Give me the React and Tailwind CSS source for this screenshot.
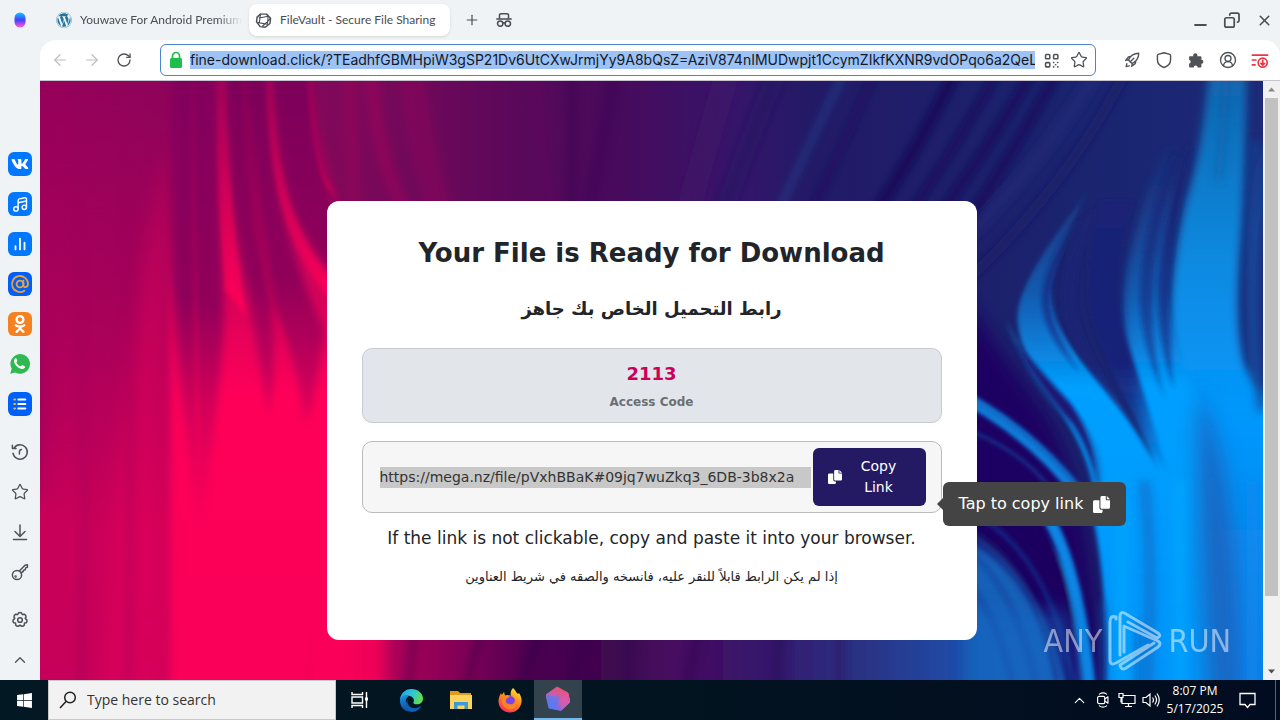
import React from "react";
import {
  ArrowLeft, ArrowRight, RotateCw, Star, CircleUserRound, Plus, X, ChevronUp,
} from "lucide-react";
import { FaWordpress, FaVk, FaOdnoklassniki, FaWindows } from "react-icons/fa";

const URL_TEXT =
  "fine-download.click/?TEadhfGBMHpiW3gSP21Dv6UtCXwJrmjYy9A8bQsZ=AziV874nIMUDwpjt1CcymZIkfKXNR9vdOPqo6a2QeL";

function Line({ size = 20, width = 1.5, children, className = "" }) {
  return (
    <svg width={size} height={size} viewBox="0 0 20 20" fill="none" stroke="currentColor"
      strokeWidth={width} strokeLinecap="round" strokeLinejoin="round" className={className} aria-hidden="true">
      {children}
    </svg>
  );
}

function CopyIcon({ size }) {
  return (
    <svg width={size} height={size} viewBox="0 0 512 512" fill="currentColor" className="shrink-0" aria-hidden="true">
      <path d="M384 96V0H272c-26.500 0-48 21.500-48 48v288c0 26.500 21.500 48 48 48h192c26.500 0 48-21.500 48-48V128h-96c-17.600 0-32-14.400-32-32zM416 0v96h96L416 0zM192 352V128H48c-26.500 0-48 21.500-48 48v288c0 26.500 21.500 48 48 48h192c26.500 0 48-21.500 48-48v-48h-32c-35.300 0-64-28.700-64-64z" />
    </svg>
  );
}

function IconButton({ label, className = "size-8", children }) {
  return (
    <button type="button" aria-label={label} className={`flex shrink-0 items-center justify-center ${className}`}>
      {children}
    </button>
  );
}

function AppTile({ className, children }) {
  return <span className={`flex size-6 items-center justify-center rounded-md ${className}`}>{children}</span>;
}

function Sidebar() {
  return (
    <nav aria-label="Browser sidebar" className="flex w-10 shrink-0 flex-col text-[#4f5358]">
      <IconButton label="Home" className="size-10">
        <svg width="14" height="18" viewBox="0 0 14 18" aria-hidden="true">
          <defs>
            <linearGradient id="orb" x1="0" y1="0" x2="0" y2="1">
              <stop offset="0" stopColor="#10c8f8" />
              <stop offset="0.5" stopColor="#4a3cff" />
              <stop offset="1" stopColor="#ff5fd0" />
            </linearGradient>
            <filter id="orbSoft"><feGaussianBlur stdDeviation="0.7" /></filter>
          </defs>
          <rect x="1.5" y="1.5" width="11" height="15" rx="5.5" fill="url(#orb)" filter="url(#orbSoft)" />
        </svg>
      </IconButton>
      <div className="mt-26 flex flex-col">
        <IconButton label="VK" className="size-10"><AppTile className="bg-[#0077ff] text-white"><FaVk size={18} /></AppTile></IconButton>
        <IconButton label="Music" className="size-10">
          <AppTile className="bg-[#0077ff] text-white">
            <Line size={19}>
              <circle cx="5.2" cy="14.7" r="2.3" /><circle cx="14" cy="13" r="2.3" />
              <path d="M7.5 14.7V5.8c0-.9.5-1.5 1.4-1.7l5.6-1.2c1.1-.2 1.8.4 1.8 1.4V13M7.5 8.2l8.8-1.9" />
            </Line>
          </AppTile>
        </IconButton>
        <IconButton label="Statistics" className="size-10">
          <AppTile className="bg-[#0077ff] text-white"><Line size={18} width={2}><path d="M5 12.5V16M10 4v12M15 8.5V16" /></Line></AppTile>
        </IconButton>
        <IconButton label="Mail" className="size-10">
          <AppTile className="bg-[#005ff9] text-[#e8a33c]">
            <Line size={20} width={1.800}><circle cx="10" cy="10" r="3.400" /><path d="M13.400 6.600v4.600c0 2.900 4.600 2.500 4.600-1.200a8 8 0 1 0-3.600 6.700" /></Line>
          </AppTile>
        </IconButton>
        <IconButton label="Odnoklassniki" className="size-10"><AppTile className="bg-[#f58220] text-white"><FaOdnoklassniki size={18} /></AppTile></IconButton>
        <IconButton label="WhatsApp" className="size-10">
          <svg width="22" height="22" viewBox="0 0 22 22" aria-hidden="true">
            <path d="M1.200 20.800l1.500-5A9.800 9.800 0 1 1 6.300 19.400z" fill="#2fb950" />
            <path d="M7.600 5.800c-.5-.9-1-.8-1.600-.2-2 2.300-.6 5.300 2 7.900 2.700 2.600 5.700 3.300 7.600 1.500.8-.8.700-1.400 0-1.800l-1.900-1c-.6-.3-.9 0-1.300.6-.5.600-.9.600-1.600.3-1.300-.7-2.500-1.700-3.200-3-.3-.6-.1-.9.300-1.300.5-.5.500-.9.300-1.400z" fill="#fff" />
          </svg>
        </IconButton>
        <IconButton label="Lists" className="size-10">
          <AppTile className="bg-[#005ff9] text-white">
            <Line size={18} width={2}><path d="M8 5h8M8 10h8M8 15h8" /><path d="M3.500 5h1M3.500 10h1M3.500 15h1" stroke="#f7b82e" /></Line>
          </AppTile>
        </IconButton>
      </div>
      <div className="mt-2 flex flex-col">
        <IconButton label="History" className="size-10">
          <Line><path d="M4 6.200A7.200 7.200 0 1 1 3 11.200M2.400 3.200v3.400h3.600M11.400 7.600c-1.500.2-2 1-2 2.400v2" /></Line>
        </IconButton>
        <IconButton label="Bookmarks" className="size-10"><Star size={18} strokeWidth={1.700} /></IconButton>
        <IconButton label="Downloads" className="size-10"><Line><path d="M10 3v11M5 9.500l5 5 5-5M3.500 17.500h13" /></Line></IconButton>
        <IconButton label="Passwords" className="size-10">
          <Line><circle cx="7" cy="13" r="4.600" /><circle cx="5.600" cy="14.400" r="0.500" /><path d="M9.300 9L15 3.300l2.400-.5v2.600l-1.800.5-.3 1.900-1.800.4-.3 1.300-2.200 1.300" /></Line>
        </IconButton>
      </div>
      <div className="mt-auto flex flex-col">
        <IconButton label="Settings" className="size-10">
          <Line size={18} width={1.700}>
            <circle cx="10" cy="10" r="2.600" />
            <path d="M8.300 2.200Q10 1.200 11.700 2.200L12.500 3.900 14.900 3.600Q16.700 4.600 16.700 6.500L15.800 8.200 17.600 9.800Q18.300 11.500 17 13.100L15 13.300 14.700 15.700Q13.300 17.300 11.400 16.700L10 15.700 8.600 16.700Q6.700 17.300 5.300 15.700L5 13.300 3 13.100Q1.700 11.500 2.400 9.800L4.200 8.200 3.300 6.500Q3.300 4.600 5.100 3.600L7.500 3.900z" />
          </Line>
        </IconButton>
        <IconButton label="Collapse" className="size-10"><ChevronUp size={18} strokeWidth={1.700} /></IconButton>
      </div>
    </nav>
  );
}

function TabStrip() {
  return (
    <div className="flex h-10 items-center font-['Lato',sans-serif] text-[#4a4d52]">
      <div className="flex min-w-0 flex-1 items-center">
        <button type="button" className="flex h-8 w-[209px] items-center gap-2 pl-4 text-left text-xs whitespace-nowrap">
          <FaWordpress size={16} className="shrink-0 text-[#21759b]" />
          <span className="mask-r-from-85%">Youwave For Android Premium</span>
        </button>
        <button type="button" className="flex h-8 w-[201px] items-center gap-2 rounded-lg bg-white px-1.5 text-left text-xs whitespace-nowrap shadow-sm">
          <Line size={17} width={1.700}>
            <path d="M6.500 2.500L13.500 2.500 18.300 7.500 17.600 13.500 12 18 6 17.200 1.800 11.500 2.500 6z" />
            <path d="M6.500 2.500L5 13M5 7L15.500 5M15.500 5L14.500 14.500M18 8L9 16.500M14.500 14.500L4 12.500" strokeWidth="1.300" />
          </Line>
          <span>FileVault - Secure File Sharing</span>
        </button>
        <IconButton label="New tab" className="ml-1.5 size-8"><Plus size={16} strokeWidth={1.800} /></IconButton>
        <IconButton label="Incognito window">
          <Line size={18} width={1.700}><path d="M5 8V4.500C5 3.500 5.800 3 6.700 3h6.600c.9 0 1.700.5 1.700 1.500V8M2 9h16" /><circle cx="5.800" cy="14" r="3" /><circle cx="14.200" cy="14" r="3" /><path d="M8.800 13.500q1.200-.8 2.400 0" /></Line>
        </IconButton>
      </div>
      <div className="flex items-center">
        <IconButton label="Minimize"><Line size={18} width={2.200}><path d="M4.500 15.500h12" /></Line></IconButton>
        <IconButton label="Restore">
          <Line size={18} width={1.900}><rect x="2" y="7.500" width="10.500" height="10.500" rx="2" /><path d="M7.500 4.500V4c0-1 .8-1.700 1.700-1.700H16c1 0 1.800.7 1.800 1.700v6.600c0 1-.8 1.700-1.700 1.700" /></Line>
        </IconButton>
        <IconButton label="Close"><X size={17} strokeWidth={2.200} /></IconButton>
      </div>
    </div>
  );
}

function Toolbar() {
  return (
    <div className="flex h-[41px] items-center rounded-t-2xl border-b border-[#c9c3d0] bg-white pl-1 text-[#4f5358]">
      <IconButton label="Back"><ArrowLeft size={18} strokeWidth={1.600} className="text-[#b9bcc0]" /></IconButton>
      <IconButton label="Forward"><ArrowRight size={18} strokeWidth={1.600} className="text-[#b9bcc0]" /></IconButton>
      <IconButton label="Reload"><RotateCw size={16} strokeWidth={2} /></IconButton>
      <div className="ml-5 flex h-8 min-w-0 flex-1 items-center rounded-md border border-[#4a86cf] pr-0.5 pl-2">
        <svg width="14" height="18" viewBox="0 0 14 18" className="mr-[7px] shrink-0" aria-hidden="true">
          <path d="M3.500 8V5a3.500 3.500 0 0 1 7 0v3" fill="none" stroke="#1cbf4b" strokeWidth="1.700" />
          <rect x="1" y="7" width="12" height="10" rx="1.500" fill="#1cbf4b" />
        </svg>
        <input aria-label="Address" readOnly value={URL_TEXT} spellCheck={false}
          className="h-[18px] min-w-0 flex-1 bg-[#9dc3f6] font-['Inter',sans-serif] text-sm text-[#111827] outline-none" />
        <IconButton label="QR code" className="ml-0.5 size-7">
          <Line size={17} width={1.800}><rect x="3" y="3" width="5" height="5" rx="1" /><rect x="12.500" y="3" width="5" height="5" rx="1" /><rect x="3" y="12.500" width="5" height="5" rx="1" /><path d="M12.300 12.300h.4M17 12.300h.4M14.700 14.900h.4M12.300 17.500h.4M17.200 17.500h.4" /></Line>
        </IconButton>
        <IconButton label="Bookmark" className="size-7"><Star size={18} strokeWidth={1.700} /></IconButton>
      </div>
      <div className="ml-5 flex pr-1">
        <IconButton label="Boost">
          <Line size={18}><path d="M6 10c2-4 5.500-7.500 11.500-7.500C17.500 8.500 14 12 10 14zM6.500 9.500L3 10.500l3-4 3-.8M10.500 13.500L9.600 17l4-3 .7-3M7 16.500l-3.500.8L4.300 14" /><path d="M8 12l4-4" /></Line>
        </IconButton>
        <IconButton label="Protection">
          <Line size={18} width={1.600}><path d="M10 2l6.500 1.800q.8.300.8 1.200V10c0 4-3 6.800-7.300 8.300C5.700 16.800 2.700 14 2.700 10V5q0-.9.800-1.200z" /></Line>
        </IconButton>
        <IconButton label="Extensions">
          <svg width="16" height="16" viewBox="0 0 16 16" fill="currentColor" aria-hidden="true">
            <path d="M2 4.200h3.200a2.200 2.200 0 1 1 4.200 0h3.100q.9 0 .9.900v2.700a2 2 0 1 1 0 4v2.700q0 .9-.9.900h-2.800a2 2 0 0 0-4 0H2q-.9 0-.9-.9v-2.800a2 2 0 0 0 0-3.900V5.100q0-.9.900-.9z" />
          </svg>
        </IconButton>
        <IconButton label="Profile"><CircleUserRound size={18} strokeWidth={1.800} /></IconButton>
        <IconButton label="Download progress" className="size-8 text-[#ee3345]">
          <Line size={18} width={1.900}><path d="M1.500 4.500h17M1.500 10h4M1.500 15.500h3" /><circle cx="13" cy="13" r="5" /><path d="M13 10.500v5M11 13.700l2 2 2-2" /></Line>
        </IconButton>
      </div>
    </div>
  );
}

function Backdrop() {
  return (
    <svg className="absolute inset-0 size-full" viewBox="0 0 1223 599" preserveAspectRatio="none" aria-hidden="true">
      <defs>
        <linearGradient id="base" x1="0" x2="1" y1="0" y2="0">
          <stop offset="0" stopColor="#94005a" /><stop offset="0.24" stopColor="#80085a" />
          <stop offset="0.36" stopColor="#62085a" /><stop offset="0.47" stopColor="#480a5c" />
          <stop offset="0.57" stopColor="#35156a" /><stop offset="0.63" stopColor="#231a66" />
          <stop offset="0.85" stopColor="#1a246f" /><stop offset="1" stopColor="#1c2a78" />
        </linearGradient>
        <linearGradient id="redfall" x1="0" x2="0" y1="0" y2="1">
          <stop offset="0" stopColor="#c8005a" stopOpacity="0" /><stop offset="0.4" stopColor="#c8005a" stopOpacity="0.45" />
          <stop offset="0.7" stopColor="#cc005a" stopOpacity="0.95" /><stop offset="1" stopColor="#c6005a" />
        </linearGradient>
        <linearGradient id="hot" gradientUnits="userSpaceOnUse" x1="0" x2="0" y1="0" y2="599">
          <stop offset="0" stopColor="#ff0058" stopOpacity="0.1" /><stop offset="0.3" stopColor="#ff0058" stopOpacity="0.55" />
          <stop offset="0.52" stopColor="#ff0059" /><stop offset="1" stopColor="#fa0059" />
        </linearGradient>
        <linearGradient id="dusk" gradientUnits="userSpaceOnUse" x1="0" x2="0" y1="0" y2="440">
          <stop offset="0" stopColor="#82005c" /><stop offset="0.5" stopColor="#90005a" /><stop offset="1" stopColor="#e0005a" stopOpacity="0.2" />
        </linearGradient>
        <linearGradient id="duskB" gradientUnits="userSpaceOnUse" x1="0" x2="0" y1="0" y2="360">
          <stop offset="0" stopColor="#7c005a" /><stop offset="0.55" stopColor="#90005a" /><stop offset="1" stopColor="#c8005a" stopOpacity="0.5" />
        </linearGradient>
        <linearGradient id="ember" gradientUnits="userSpaceOnUse" x1="0" x2="0" y1="0" y2="230">
          <stop offset="0" stopColor="#a80058" stopOpacity="0.7" /><stop offset="0.4" stopColor="#c80058" /><stop offset="1" stopColor="#ff0058" />
        </linearGradient>
        <linearGradient id="emberLow" gradientUnits="userSpaceOnUse" x1="0" x2="0" y1="0" y2="330">
          <stop offset="0" stopColor="#b00058" stopOpacity="0.3" /><stop offset="0.6" stopColor="#c80058" stopOpacity="0.7" /><stop offset="1" stopColor="#ff0058" />
        </linearGradient>
        <linearGradient id="root" gradientUnits="userSpaceOnUse" x1="0" x2="0" y1="420" y2="599">
          <stop offset="0" stopColor="#c0005a" stopOpacity="0.7" /><stop offset="0.5" stopColor="#ac005a" /><stop offset="1" stopColor="#a4005a" />
        </linearGradient>
        <linearGradient id="foot" gradientUnits="userSpaceOnUse" x1="300" x2="960" y1="0" y2="0">
          <stop offset="0" stopColor="#fa0058" /><stop offset="0.055" stopColor="#ee0058" /><stop offset="0.085" stopColor="#a80058" />
          <stop offset="0.2" stopColor="#7a0055" /><stop offset="0.29" stopColor="#4c0050" /><stop offset="0.42" stopColor="#3c0850" />
          <stop offset="0.5" stopColor="#480a60" /><stop offset="0.65" stopColor="#34186c" /><stop offset="0.8" stopColor="#2a3486" />
          <stop offset="0.92" stopColor="#2048a4" /><stop offset="1" stopColor="#1464c0" />
        </linearGradient>
        <linearGradient id="sky" gradientUnits="userSpaceOnUse" x1="0" x2="0" y1="0" y2="599">
          <stop offset="0" stopColor="#1268b0" /><stop offset="0.3" stopColor="#0e8ae0" /><stop offset="0.55" stopColor="#0498fc" /><stop offset="1" stopColor="#0a80e8" />
        </linearGradient>
        <linearGradient id="wisp" gradientUnits="userSpaceOnUse" x1="0" x2="0" y1="60" y2="599">
          <stop offset="0" stopColor="#1a5ca8" stopOpacity="0" /><stop offset="0.28" stopColor="#1468c0" stopOpacity="0.8" />
          <stop offset="0.46" stopColor="#02a0ff" /><stop offset="1" stopColor="#0696fa" />
        </linearGradient>
        <linearGradient id="gap" gradientUnits="userSpaceOnUse" x1="0" x2="0" y1="100" y2="400">
          <stop offset="0" stopColor="#1a2474" /><stop offset="0.6" stopColor="#192078" /><stop offset="1" stopColor="#0a70d4" stopOpacity="0.2" />
        </linearGradient>
        <filter id="b2" filterUnits="userSpaceOnUse" x="-60" y="-60" width="1343" height="719"><feGaussianBlur stdDeviation="2" /></filter>
        <filter id="b4" filterUnits="userSpaceOnUse" x="-60" y="-60" width="1343" height="719"><feGaussianBlur stdDeviation="4" /></filter>
        <filter id="b9" filterUnits="userSpaceOnUse" x="-60" y="-60" width="1343" height="719"><feGaussianBlur stdDeviation="10" /></filter>
      </defs>
      <rect width="1223" height="599" fill="url(#base)" />
      <path d="M-50 -20H140V640H-50z" fill="url(#redfall)" filter="url(#b4)" />
      <path d="M-50 100Q20 260 -5 420L-50 420z" fill="#85005c" opacity="0.6" filter="url(#b9)" />
      <path d="M60 640Q76 300 128 60V640z" fill="#f0005a" opacity="0.4" filter="url(#b9)" />

      <path d="M130 -40H268Q276 60 300 130H345V640H130z" fill="url(#hot)" filter="url(#b4)" />
      <path d="M130 -40H176Q178 120 184 240Q178 340 160 450Q140 340 134 230Q126 120 130 -40z" fill="url(#dusk)" filter="url(#b4)" />
      <path d="M188 -40H226Q228 70 242 130Q256 190 285 250Q276 310 266 345Q254 270 232 225Q238 290 228 335Q210 220 196 150Q186 80 188 -40z" fill="url(#duskB)" filter="url(#b4)" />
      <path d="M234 -40H268Q270 60 290 106L310 210Q268 170 250 120Q234 60 234 -40z" fill="url(#duskB)" filter="url(#b4)" />
      <path d="M177 -40Q176 110 186 210L206 235Q186 120 184 -40z" fill="url(#ember)" filter="url(#b2)" />
      <path d="M225 -40Q226 90 250 150Q268 200 310 240L310 215Q268 180 250 124Q232 70 232 -40z" fill="url(#ember)" filter="url(#b2)" />
      <path d="M266 -40Q268 60 286 106L310 128Q284 110 277 60Q272 20 273 -40z" fill="url(#ember)" opacity="0.85" filter="url(#b2)" />
      <path d="M200 -40Q200 120 236 250L262 335Q226 210 205 -40z" fill="url(#emberLow)" opacity="0.55" filter="url(#b2)" />
      <path d="M150 -40H155L160 420Q152 300 150 -40z" fill="url(#emberLow)" opacity="0.5" filter="url(#b2)" />
      <g fill="none" stroke="#b80058" filter="url(#b4)">
        <path d="M330 -50Q330 60 362 125" strokeWidth="14" opacity="0.35" />
        <path d="M366 -50Q376 60 404 140" strokeWidth="26" opacity="0.2" />
        <path d="M312 -50Q308 60 316 130" strokeWidth="14" opacity="0.25" />
      </g>
      <path d="M84 620Q90 300 84 60Q100 300 92 620zM36 620Q44 340 38 110Q54 340 44 620z" fill="#98005a" opacity="0.3" filter="url(#b4)" />

      <path d="M200 410Q201 520 190 650H160Q178 520 200 410z" fill="url(#root)" filter="url(#b4)" />
      <path d="M254 450Q240 550 240 650H208Q222 540 254 450z" fill="url(#root)" filter="url(#b4)" />
      <path d="M304 480L290 650H250Q264 560 304 480z" fill="url(#root)" filter="url(#b4)" />
      <path d="M206 520Q204 580 208 640H200Q200 580 206 520z" fill="url(#root)" opacity="0.6" filter="url(#b2)" />
      <path d="M272 540L260 650H268z" fill="#f00058" filter="url(#b2)" />

      <g fill="none" filter="url(#b4)">
        <path d="M530 -50Q536 80 528 160" stroke="#360050" strokeWidth="12" opacity="0.4" />
        <path d="M578 -50Q566 70 540 160" stroke="#350052" strokeWidth="14" opacity="0.4" />
        <path d="M492 -50Q500 80 520 160" stroke="#700a60" strokeWidth="8" opacity="0.25" />
        <path d="M700 -50Q664 70 640 160" stroke="#451668" strokeWidth="24" opacity="0.4" />
        <path d="M756 -50Q710 50 674 160" stroke="#221560" strokeWidth="18" opacity="0.5" />
        <path d="M810 -20Q770 60 725 160" stroke="#1c4a94" strokeWidth="6" opacity="0.6" />
        <path d="M850 -50Q805 70 755 160" stroke="#171058" strokeWidth="8" opacity="0.4" />
        <path d="M935 -50Q880 70 816 160" stroke="#13064e" strokeWidth="11" opacity="0.7" />
        <path d="M980 -50Q910 80 850 160" stroke="#150a54" strokeWidth="8" opacity="0.6" />
        <path d="M1015 -50Q950 70 880 160M1040 -50Q965 90 905 172" stroke="#140352" strokeWidth="10" opacity="0.6" />
        <path d="M1105 -50Q1040 100 905 220" stroke="#17145e" strokeWidth="10" opacity="0.4" />
        <path d="M1080 -50Q1010 80 907 175" stroke="#262a7a" strokeWidth="14" opacity="0.5" />
      </g>

      <path d="M900 180Q945 250 990 310Q1060 390 1062 640H900z" fill="#1a0562" filter="url(#b9)" />
      <path d="M1172 -50H1207Q1206 90 1200 168Q1194 250 1205 285L1260 370V650H1060Q1090 480 1116 400Q1138 340 1131 250Q1128 200 1146 120Q1166 60 1172 -50z" fill="url(#sky)" filter="url(#b4)" />
      <path d="M1146 10Q1086 150 1084 219Q1084 290 1110 370Q1122 470 1108 650H1190L1160 330Q1126 250 1128 200Q1132 120 1146 10z" fill="url(#wisp)" filter="url(#b4)" />
      <path d="M1048 110Q990 185 980 220Q970 250 1000 300Q1062 380 1054 440Q1070 520 1066 650H1160Q1154 470 1120 391Q1086 330 1054 295Q1004 240 1012 200Q1020 165 1048 110z" fill="url(#wisp)" filter="url(#b2)" />
      <g filter="url(#b2)">
        <path d="M1060 120Q1036 200 1058 258Q1084 320 1128 395Q1104 310 1083 250Q1072 190 1094 120z" fill="url(#gap)" />
        <path d="M1050 130Q1012 190 1024 238Q1042 290 1096 345Q1050 280 1038 236Q1030 190 1056 130z" fill="url(#gap)" opacity="0.7" />
        <path d="M1036 140Q998 190 1002 226Q1006 256 1040 292Q1012 250 1010 222Q1010 190 1040 140z" fill="url(#gap)" opacity="0.6" />
        <path d="M1134 70Q1100 150 1100 220Q1102 270 1126 320Q1110 270 1112 220Q1112 150 1140 80z" fill="url(#gap)" opacity="0.5" />
        <path d="M1148 60Q1120 150 1118 210Q1118 260 1134 310Q1128 260 1130 210Q1132 150 1152 70z" fill="url(#gap)" opacity="0.55" />
      </g>
      <g fill="none" filter="url(#b4)">
        <path d="M1187 -50Q1186 40 1178 100" stroke="#184f9c" strokeWidth="7" opacity="0.4" />
        <path d="M1232 60Q1202 190 1222 330" stroke="#184a9c" strokeWidth="9" opacity="0.8" />
        <path d="M1216 60Q1206 200 1214 300" stroke="#1565b8" strokeWidth="4" opacity="0.7" />
      </g>
      <path d="M965 238Q985 296 1022 335Q1056 376 1058 420Q1072 380 1040 335Q1000 296 965 238z" fill="#1668b8" opacity="0.5" filter="url(#b2)" />
      <path d="M976 262Q1002 310 1034 344Q1052 372 1058 408Q1056 360 1030 322Q1000 290 976 262z" fill="#1a1672" filter="url(#b2)" />
      <g fill="none" filter="url(#b2)">
        <path d="M900 304Q990 346 1044 420" stroke="#0a84e0" strokeWidth="12" />
        <path d="M900 304Q990 344 1044 416" stroke="#1a4aa8" strokeWidth="2" />
        <path d="M900 340Q980 362 1016 415" stroke="#165aae" strokeWidth="3" opacity="0.6" />
      </g>
      <path d="M1158 310Q1206 400 1198 660H1170Q1156 450 1158 310z" fill="#1c62bc" opacity="0.85" filter="url(#b9)" />
      <path d="M1104 400Q1116 500 1104 660" stroke="#1268c4" strokeWidth="12" opacity="0.6" fill="none" filter="url(#b4)" />
      <path d="M900 450Q1006 470 1036 660H900z" fill="#1560b8" filter="url(#b4)" />
      <g fill="none" filter="url(#b2)">
        <path d="M940 418Q1018 460 1040 560" stroke="#1a0360" strokeWidth="20" />
        <path d="M900 434Q996 466 1018 600" stroke="#1b0a66" strokeWidth="7" opacity="0.8" />
        <path d="M1040 540Q1046 600 1044 660" stroke="#1a4aa4" strokeWidth="14" opacity="0.7" />
        <path d="M900 440Q1014 480 1030 660M900 420Q1022 450 1042 660" stroke="#1568c0" strokeWidth="2" opacity="0.7" />
        <path d="M900 450Q985 490 1006 660M900 474Q966 520 982 660" stroke="#1a3490" strokeWidth="4" opacity="0.5" />
        <path d="M990 414Q1042 460 1054 660" stroke="#0c86e4" strokeWidth="12" />
      </g>
      <g fill="none" filter="url(#b4)">
        <path d="M1082 420V660M1140 400V660" stroke="#00a8ff" strokeWidth="12" opacity="0.6" />
        <path d="M1064 520V660M1098 540V660" stroke="#1458b4" strokeWidth="6" opacity="0.6" />
        <path d="M1212 400V660" stroke="#0a86ec" strokeWidth="10" opacity="0.7" />
      </g>
      <path d="M310 530H930V660H300z" fill="url(#foot)" filter="url(#b4)" />
      <path d="M930 530H1030V660H930z" fill="#1468c4" opacity="0.5" filter="url(#b9)" />
      <g fill="none" stroke="#2c004a" filter="url(#b4)" opacity="0.4">
        <path d="M510 520L462 660M552 520L516 660M592 520L586 660M664 520L636 660M740 520L736 660" strokeWidth="9" />
        <path d="M450 520L410 660M800 520V660M378 520L362 660" strokeWidth="6" />
      </g>
    </svg>
  );
}

function Watermark() {
  return (
    <div className="pointer-events-none absolute right-8 bottom-2 flex items-center gap-1.5 font-['DejaVu_Sans_Condensed',sans-serif] text-[32px] font-extralight text-white opacity-50">
      <span>ANY</span>
      <svg width="54" height="62" viewBox="0 0 54 62" fill="none" stroke="currentColor" strokeWidth="3" strokeLinejoin="round" strokeLinecap="round" aria-hidden="true">
        <path d="M8 9V7Q2 5 2 12V50Q2 56 8 53L40 35" />
        <path d="M12 45V7Q12 0 18 4L50 23Q54 26 49 28L20 12M16 16V42" />
        <path d="M18 17L50 31Q54 34 50 37L18 58Q13 61 12 55L46 33" />
      </svg>
      <span>RUN</span>
    </div>
  );
}

function DownloadCard() {
  return (
    <section className="relative mx-auto mt-[120px] mb-10 w-[650px] max-w-full rounded-xl bg-white px-[35px] pt-8 pb-[51px] text-center text-[#212529]">
      <h1 className="text-[26px] leading-10 font-bold">Your File is Ready for Download</h1>
      <h2 dir="rtl" className="mt-4 text-lg leading-10 font-bold">رابط التحميل الخاص بك جاهز</h2>
      <div className="mt-[19px] rounded-[10px] border border-[#c8ccd0] bg-[#e2e6ea] pt-[11px] pb-1.5">
        <p className="text-lg leading-7 font-bold text-[#cc0058]">2113</p>
        <p className="text-xs leading-7 font-bold text-[#6c6f73]">Access Code</p>
      </div>
      <div className="relative mt-[18px] flex items-center rounded-[10px] border border-[#bbbbbb] bg-[#f6f6f6] py-1.5 pr-[15px] pl-[17px]">
        <input aria-label="Download link" readOnly value="https://mega.nz/file/pVxhBBaK#09jq7wuZkq3_6DB-3b8x2a"
          className="mr-0.5 h-[21px] min-w-0 flex-1 bg-[#c8c8c8] text-sm text-[#333333] outline-none" />
        <button type="button" className="flex h-[58px] w-[113px] shrink-0 items-center rounded-md bg-[#241a63] pr-2.5 pl-[15px] text-sm leading-[21px] text-white">
          <CopyIcon size={14} />
          <span className="flex-1 px-4">Copy Link</span>
        </button>
        <div role="tooltip" className="absolute top-10 left-full ml-0.5 flex h-11 items-center gap-2.5 rounded-md bg-[#444444] px-4 text-base whitespace-nowrap text-white">
          <span className="absolute top-4 -left-1.5 size-0 border-y-6 border-r-6 border-y-transparent border-r-[#444444]" />
          Tap to copy link
          <CopyIcon size={17} />
        </div>
      </div>
      <p className="mt-[13px] text-[17px] leading-6">If the link is not clickable, copy and paste it into your browser.</p>
      <p dir="rtl" className="mt-[15px] text-[13px] leading-6">إذا لم يكن الرابط قابلاً للنقر عليه، فانسخه والصقه في شريط العناوين</p>
    </section>
  );
}

function PageScrollbar() {
  return (
    <div className="flex w-[17px] shrink-0 flex-col items-center bg-[#f1f1f1] text-[#8a8a8a]">
      <svg width="17" height="17" viewBox="0 0 17 17" aria-hidden="true"><path d="M5 10.500l3.500-4 3.500 4z" fill="currentColor" /></svg>
      <div className="w-[13px] flex-[498] bg-[#c1c1c1]" />
      <div className="flex-[67]" />
      <svg width="17" height="17" viewBox="0 0 17 17" aria-hidden="true"><path d="M5 6.500l3.500 4 3.500-4z" fill="#505050" /></svg>
    </div>
  );
}

function Taskbar() {
  return (
    <footer className="flex h-10 items-stretch bg-linear-to-r from-[#021822] via-[#021420] to-[#020c20] font-['Open_Sans','Noto_Sans',sans-serif] text-white">
      <IconButton label="Start" className="w-12"><FaWindows size={17} /></IconButton>
      <label className="flex w-72 items-center gap-2.5 border border-[#c8c8c8] bg-[#f2f2f2] pl-2.5 text-[#222222]">
        <svg width="18" height="18" viewBox="0 0 18 18" fill="none" stroke="currentColor" strokeWidth="1.500" aria-hidden="true"><circle cx="11" cy="6.500" r="5.300" /><path d="M7.200 10.300L1 17" /></svg>
        <input aria-label="Search" placeholder="Type here to search" className="min-w-0 flex-1 text-sm outline-none placeholder:text-[#333333]" />
      </label>
      <IconButton label="Task view" className="w-12">
        <svg width="18" height="18" viewBox="0 0 18 18" fill="none" stroke="currentColor" strokeWidth="1.400" aria-hidden="true"><path d="M1 1v2.500h10.500V1M1 17v-2.500h10.500V17M1 6h10.500v6H1zM15.500 1v16" /><path d="M15.500 6.500v3" strokeWidth="3" /></svg>
      </IconButton>
      <div className="ml-[3px] flex">
        <IconButton label="Edge" className="w-[49px]">
          <svg width="25" height="25" viewBox="0 0 26 26" aria-hidden="true">
            <defs>
              <linearGradient id="eg" x1="0" y1="0" x2="1" y2="0.300"><stop offset="0" stopColor="#1e9de8" /><stop offset="0.600" stopColor="#30c6d0" /><stop offset="1" stopColor="#5fdc52" /></linearGradient>
              <linearGradient id="ed" x1="0" y1="0" x2="0" y2="1"><stop offset="0" stopColor="#1b8fe0" /><stop offset="1" stopColor="#0c4fa0" /></linearGradient>
            </defs>
            <path d="M1 13C1 6 6 1 13 1s12 5 12 10c0 4-3 6-6 6s-4.500-1-4-2c1-1.500 1-5-3-6.500C8 7 3 8 1 13z" fill="url(#eg)" />
            <path d="M1 13c1-5 6-7 10-5-3 1-5 5-3.500 9 1.500 4.500 6 6 9.500 5.500-7 5-16 0-16-9.500z" fill="url(#ed)" />
            <path d="M9 12c-1.500 5 3 9.500 8 9 3-.3 5-1.500 6.200-3-1 4-5.200 7-9.700 7C8 24 5 17 9 12z" fill="#0d5fb8" />
          </svg>
        </IconButton>
        <IconButton label="File Explorer" className="w-[49px]">
          <svg width="22" height="20" viewBox="0 0 22 20" aria-hidden="true">
            <path d="M0 1h8l2 2h11v4H0z" fill="#e39a18" /><path d="M0 5h22v14H0z" fill="#ffd35c" />
            <path d="M4 12h14v7h-3.500v-3.500h-7V19H4z" fill="#3b9ad8" />
          </svg>
        </IconButton>
        <IconButton label="Firefox" className="w-[49px]">
          <svg width="24" height="25" viewBox="0 0 24 25" aria-hidden="true">
            <defs><linearGradient id="ff" x1="0.800" y1="0" x2="0.300" y2="1"><stop offset="0" stopColor="#ffe838" /><stop offset="0.450" stopColor="#ff9020" /><stop offset="1" stopColor="#ff2b58" /></linearGradient></defs>
            <path d="M15 0c2.500 2 3 4.500 5 6l1-1c2 3 3 6 2.500 9-.8 6-5.500 10.500-11.500 10.500S.5 20 .5 13.500C.5 10 1.500 7.500 3 5l.8 2L6 4l1 3.500c3-1.500 6 .5 6 .5-1-3 0-6 2-8z" fill="url(#ff)" />
            <circle cx="12" cy="13" r="5" fill="#7a44e8" />
            <path d="M4.500 9.500c2.500-2.300 5.500-2 8-.8-2 .4-2.300 1.800-4 2.300-1.500 1.500-.5 5 3.500 5.200s6-3 4.500-7c4 4 3 11.500-4 12.300C6 21.500 2.500 15 4.500 9.500z" fill="#ff8a1e" opacity="0.850" />
          </svg>
        </IconButton>
        <IconButton label="Browser" className="w-12 border-b-2 border-[#76b9ed] bg-[#33434e]">
          <svg width="24" height="26" viewBox="0 0 24 26" aria-hidden="true">
            <defs><linearGradient id="gem" x1="0.700" y1="0" x2="0.200" y2="1"><stop offset="0" stopColor="#f4506c" /><stop offset="0.500" stopColor="#c060b8" /><stop offset="1" stopColor="#4a78ff" /></linearGradient></defs>
            <path d="M11 1l11 6 2 9-9 8.500L3 22 0 9z" fill="url(#gem)" stroke="url(#gem)" strokeLinejoin="round" />
            <path d="M0 9l14 2-5 12.500L3 22z" fill="#527cf5" opacity="0.700" /><path d="M14 11l8-4 2 9-9 8.500z" fill="#e05aa8" opacity="0.600" />
          </svg>
        </IconButton>
      </div>
      <div className="ml-auto flex items-center">
        <IconButton label="Hidden icons" className="w-6"><ChevronUp size={17} strokeWidth={1.600} /></IconButton>
        <IconButton label="Recorder" className="w-6">
          <Line size={18} width={1.300}><rect x="4" y="6" width="8" height="8" rx="1.500" /><path d="M12 9l3.500-2.500v7L12 11M6 3.500q4-3 8 0M6 16.500q4 3 8 0" /></Line>
        </IconButton>
        <IconButton label="Network" className="w-6">
          <svg width="18" height="16" viewBox="0 0 18 16" fill="none" stroke="currentColor" strokeWidth="1.200" aria-hidden="true"><path d="M5 3.500h12v8H4V6M10.500 11.500v3M7 14.500h7M1 1.500h4v4H1zM3 5.500v5" /></svg>
        </IconButton>
        <IconButton label="Volume" className="w-6">
          <svg width="18" height="16" viewBox="0 0 18 16" fill="none" stroke="currentColor" strokeWidth="1.200" aria-hidden="true"><path d="M1 5.500h3L8 2v12l-4-3.500H1zM10.500 5.500q2 2.500 0 5M12.800 3.500q3.500 4.500 0 9M15 1.500q4.500 6.500 0 13" /></svg>
        </IconButton>
        <div className="w-16 text-center text-xs leading-[18px] whitespace-nowrap"><div>8:07 PM</div><div>5/17/2025</div></div>
        <IconButton label="Notifications" className="w-10">
          <svg width="17" height="17" viewBox="0 0 17 17" fill="none" stroke="currentColor" strokeWidth="1.300" aria-hidden="true"><path d="M1 1.500h15v11h-5L8.500 15.500 6 12.500H1z" /></svg>
        </IconButton>
        <div className="ml-2 h-10 w-[5px] border-l border-[#5a6470]" />
      </div>
    </footer>
  );
}

export default function App() {
  return (
    <div className="flex min-h-screen flex-col bg-[#f0f3f6] font-['Noto_Sans',sans-serif]">
      <div className="flex flex-1">
        <Sidebar />
        <div className="flex min-w-0 flex-1 flex-col">
          <TabStrip />
          <Toolbar />
          <div className="flex flex-1">
            <main className="relative min-w-0 flex-1 overflow-hidden font-['DejaVu_Sans',sans-serif]">
              <Backdrop />
              <Watermark />
              <DownloadCard />
            </main>
            <PageScrollbar />
          </div>
        </div>
      </div>
      <Taskbar />
    </div>
  );
}
